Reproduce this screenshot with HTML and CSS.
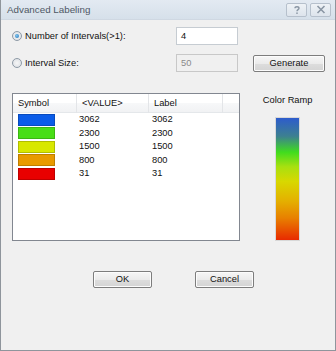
FILE: index.html
```html
<!DOCTYPE html>
<html>
<head>
<meta charset="utf-8">
<link rel="stylesheet" href="styles.css">
</head>
<body>
<div class="window">
  <div class="titlebar">
    <span class="title">Advanced Labeling</span>
    <div class="caption-btns">
      <span class="cbtn">
        <svg width="10" height="10" viewBox="0 0 10 10"><path d="M3 3.2 C3 1.2 7 1.2 7 3.2 C7 4.6 5 4.6 5 6.2" fill="none" stroke="#8a96a4" stroke-width="1.4"/><rect x="4.3" y="7.4" width="1.4" height="1.6" fill="#8a96a4"/></svg>
      </span>
      <span class="cbtn">
        <svg width="10" height="9" viewBox="0 0 10 9"><path d="M1.5 1 L8.5 8 M8.5 1 L1.5 8" stroke="#8a96a4" stroke-width="1.6"/></svg>
      </span>
    </div>
  </div>
  <div class="content">
    <div class="row row1">
      <label class="radio-label"><span class="radio checked"></span>Number of Intervals(&gt;1):</label>
      <div class="input">4</div>
    </div>
    <div class="row row2">
      <label class="radio-label"><span class="radio"></span>Interval Size:</label>
      <div class="input disabled">50</div>
      <div class="btn gen">Generate</div>
    </div>
    <div class="main">
      <div class="list">
        <div class="lhead">
          <div class="hc c1">Symbol</div>
          <div class="hc c2">&lt;VALUE&gt;</div>
          <div class="hc c3">Label</div>
          <div class="hc c4"></div>
        </div>
        <div class="lrow"><div class="c1"><span class="sw" style="background:#0a5ce8"></span></div><div class="c2">3062</div><div class="c3">3062</div></div>
        <div class="lrow"><div class="c1"><span class="sw" style="background:#48de16"></span></div><div class="c2">2300</div><div class="c3">2300</div></div>
        <div class="lrow"><div class="c1"><span class="sw" style="background:#d8e800"></span></div><div class="c2">1500</div><div class="c3">1500</div></div>
        <div class="lrow"><div class="c1"><span class="sw" style="background:#e89a00"></span></div><div class="c2">800</div><div class="c3">800</div></div>
        <div class="lrow"><div class="c1"><span class="sw" style="background:#e80000"></span></div><div class="c2">31</div><div class="c3">31</div></div>
      </div>
      <div class="ramp-col">
        <div class="ramp-label">Color Ramp</div>
        <div class="ramp"></div>
      </div>
    </div>
    <div class="footer">
      <div class="btn ok">OK</div>
      <div class="btn cancel">Cancel</div>
    </div>
  </div>
</div>
</body>
</html>
```
FILE: styles.css
```css
* { box-sizing: border-box; }
html, body { margin: 0; padding: 0; }
body {
  width: 336px; height: 351px; overflow: hidden;
  font-family: "Liberation Sans", Arial, sans-serif;
  font-size: 9.3px; line-height: 13px; color: #111;
  background: #f0f0f0;
}
.window {
  width: 336px; height: 351px;
  border: 1px solid #8f959c;
  border-top: none;
  background: #f0f0f0;
  display: flex; flex-direction: column;
}
.titlebar {
  height: 20px;
  background: linear-gradient(#e3eaf2, #d6e0ea);
  display: flex; align-items: center; justify-content: space-between;
  padding: 0 4px 0 6px;
  border-bottom: 1px solid #cfd8e2;
}
.title { color: #4e5864; font-size: 9.8px; }
.caption-btns { display: flex; gap: 3px; }
.cbtn {
  width: 21px; height: 14px;
  border: 1px solid #b6c0cc; border-radius: 2px;
  background: linear-gradient(#eef2f6, #dde4ec);
  display: flex; align-items: center; justify-content: center;
}
.content { flex: 1; display: flex; flex-direction: column; padding: 0 0 0 10px; }
.row { display: flex; align-items: center; height: 18px; }
.row1 { margin-top: 7px; }
.row2 { margin-top: 9px; }
.radio-label { display: flex; align-items: center; width: 165px; }
.radio {
  width: 10px; height: 10px; border-radius: 50%;
  border: 1px solid #8e9aa6;
  background: radial-gradient(circle, #f6f6f6, #d9dde2);
  margin-right: 3px; position: relative; margin-left: 1px;
}
.radio.checked::after {
  content: ""; position: absolute; left: 2px; top: 2px;
  width: 4px; height: 4px; border-radius: 50%;
  background: radial-gradient(circle at 40% 40%, #7fc4ee, #1f72b8);
}
.input {
  width: 62px; height: 18px;
  border: 1px solid #c6ccd2; background: #fff;
  padding: 2px 0 0 4px;
}
.input.disabled { background: #f0f0f0; color: #8a8a8a; border-color: #c8c8c8; }
.btn {
  height: 17px;
  border: 1px solid #7d7d7d; border-radius: 2px;
  background: linear-gradient(#f6f6f6 0%, #ebebeb 50%, #dddddd 51%, #d4d4d4 100%);
  display: flex; align-items: center; justify-content: center;
  box-shadow: inset 0 0 0 1px #fcfcfc;
}
.gen { width: 72px; margin-left: 15px; }
.main { display: flex; margin-top: 21px; }
.list {
  width: 229px; height: 148px; margin-left: 1px;
  border: 1px solid #828790; background: #fff;
}
.lhead {
  display: flex; height: 19px; align-items: center;
  background: linear-gradient(#fff 0%, #fff 50%, #f7f8f9 51%, #f1f2f4 100%);
  border-bottom: 1px solid #e4e7ea;
}
.hc { height: 19px; display: flex; align-items: center; border-right: 1px solid #e3e5e8; }
.c1 { width: 64px; padding-left: 5px; }
.c2 { width: 72px; padding-left: 5px; }
.c3 { width: 74px; padding-left: 5px; }
.c4 { flex: 1; border-right: none; }
.lrow { display: flex; align-items: center; height: 13.5px; }
.lrow:first-of-type { margin-top: 1px; }
.lrow .c1 { height: 13.5px; display: flex; align-items: center; }
.lrow .c2 { padding-left: 2px; }
.lrow .c3 { padding-left: 3px; }
.sw { display: block; width: 37px; height: 12px; border: 1px solid rgba(0,0,0,0.18); }
.ramp-col { display: flex; flex-direction: column; align-items: center; width: 95px; }
.ramp-label { margin-top: 1px; height: 13px; }
.ramp {
  margin-top: 10px;
  width: 25px; height: 124px;
  border: 1px solid #d8d8d8;
  background: linear-gradient(#2d5ccc 0%, #3d8090 15%, #40dc1e 28%, #a8e010 40%, #d8d800 52%, #e4b000 68%, #e88000 82%, #e82a00 100%);
}
.footer { display: flex; margin-top: 30px; padding-left: 82px; gap: 43px; }
.ok, .cancel { width: 59px; }
```
